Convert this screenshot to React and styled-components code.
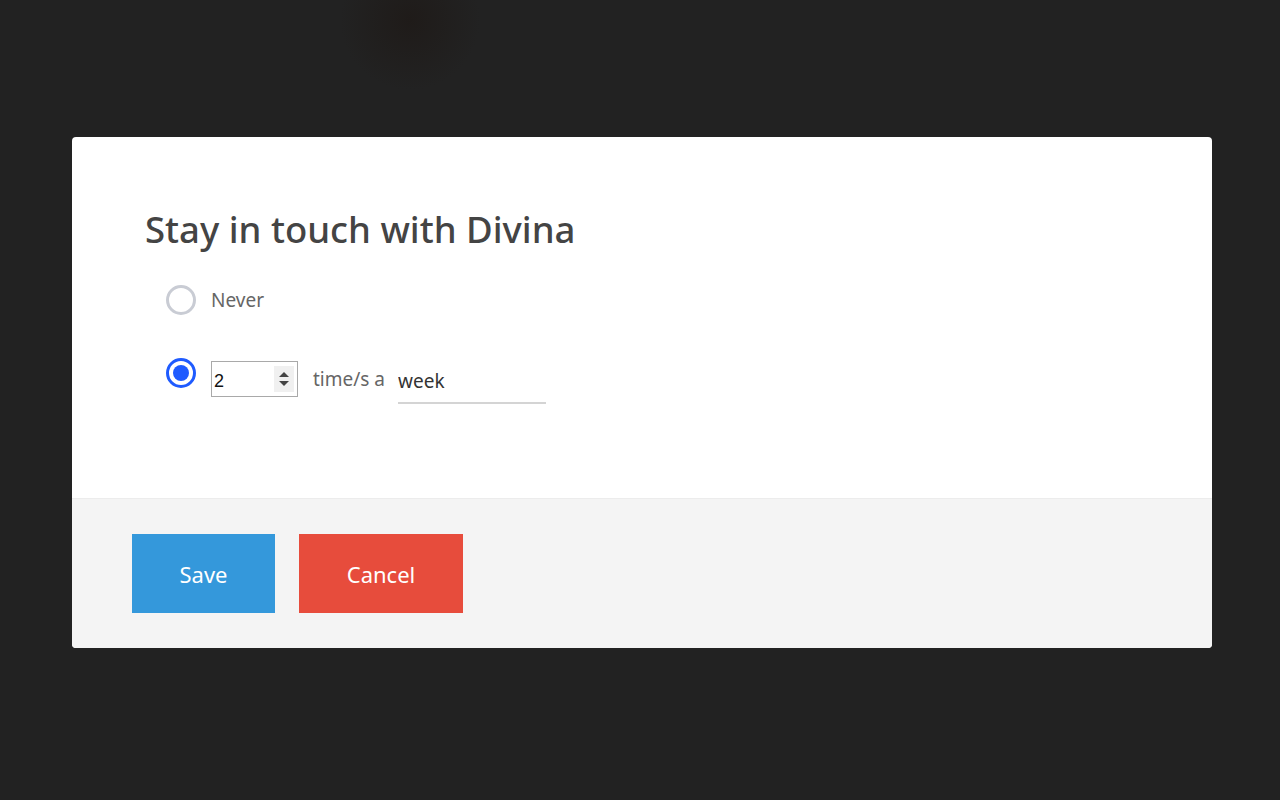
import React from 'react';
import styled, { createGlobalStyle } from 'styled-components';

const GlobalStyle = createGlobalStyle`
    html, body {
        margin: 0;
        padding: 0;
        background: #222222;
        font-family: 'Noto Sans', 'Open Sans', sans-serif;
    }
`;

const Page = styled.div`
    min-height: 800px;
    padding: 137px 68px 0 72px;
    box-sizing: border-box;
    background: radial-gradient(circle at 410px 20px, #1f1b19 0, #222222 70px);
`;

const Modal = styled.div`
    width: 1140px;
    background: #ffffff;
    border-radius: 4px;
    overflow: hidden;
`;

const Body = styled.div`
    height: 361px;
    box-sizing: border-box;
    padding: 68px 73px 0 73px;
`;

const Title = styled.h2`
    margin: 0 0 29px 0;
    font-size: 36.5px;
    font-weight: 500;
    color: #444444;
    letter-spacing: 0;
    line-height: 48px;
`;

const Options = styled.div`
    display: flex;
    flex-direction: column;
    gap: 43px;
    padding-left: 21px;
`;

const Option = styled.label`
    display: flex;
    align-items: center;
    gap: 15px;
    height: 36px;
`;

const Radio = styled.span`
    width: 30px;
    height: 30px;
    box-sizing: border-box;
    border-radius: 50%;
    border: 3px solid ${(props) => (props.checked ? '#1f5bff' : '#c9ccd4')};
    display: flex;
    align-items: center;
    justify-content: center;
    flex-shrink: 0;
    margin-top: ${(props) => (props.checked ? '-12px' : '0')};

    &::after {
        content: '';
        display: ${(props) => (props.checked ? 'block' : 'none')};
        width: 16px;
        height: 16px;
        border-radius: 50%;
        background: #1f5bff;
    }
`;

const Label = styled.span`
    font-size: 19px;
    color: ${(props) => props.color || '#666666'};
`;

const NumberBox = styled.div`
    width: 87px;
    height: 36px;
    box-sizing: border-box;
    border: 1px solid #a9a9a9;
    display: flex;
    align-items: center;
    padding: 0 3px 0 2px;
`;

const NumberValue = styled.input`
    border: none;
    outline: none;
    width: 50px;
    font-size: 18px;
    font-family: 'Liberation Sans', Arial, sans-serif;
    color: #111111;
    padding: 4px 0 0 0;
    background: transparent;
`;

const Spinner = styled.span`
    margin-left: auto;
    width: 20px;
    height: 26px;
    background: #f0f0f0;
    display: flex;
    align-items: center;
    justify-content: center;
`;

const Unit = styled.input`
    width: 148px;
    border: none;
    border-bottom: 2px solid #d4d4d4;
    outline: none;
    font-size: 19px;
    font-family: 'Noto Sans', 'Open Sans', sans-serif;
    color: #333333;
    padding: 7px 0 8px 0;
    margin-left: -2px;
    margin-top: 7px;
    background: transparent;
`;

const Footer = styled.div`
    height: 150px;
    box-sizing: border-box;
    background: #f4f4f4;
    border-top: 1px solid #ececec;
    padding: 35px 60px;
    display: flex;
    gap: 24px;
`;

const Button = styled.button`
    height: 79px;
    width: ${(props) => props.width}px;
    border: none;
    border-radius: 0;
    background: ${(props) => props.bg};
    color: #ffffff;
    font-size: 22px;
    font-family: 'Noto Sans', 'Open Sans', sans-serif;
    cursor: pointer;
`;

const SpinIcon = () => (
    <svg width="12" height="18" viewBox="0 0 12 18">
        <path d="M6 2 L11 7 L1 7 Z" fill="#444" />
        <path d="M6 16 L11 11 L1 11 Z" fill="#444" />
    </svg>
);

const App = () => (
    <Page>
        <GlobalStyle />
        <Modal>
            <Body>
                <Title>Stay in touch with Divina</Title>
                <Options>
                    <Option>
                        <Radio />
                        <Label>Never</Label>
                    </Option>
                    <Option>
                        <Radio checked />
                        <NumberBox>
                            <NumberValue defaultValue="2" readOnly />
                            <Spinner><SpinIcon /></Spinner>
                        </NumberBox>
                        <Label>time/s a</Label>
                        <Unit defaultValue="week" readOnly />
                    </Option>
                </Options>
            </Body>
            <Footer>
                <Button bg="#3498db" width={143}>Save</Button>
                <Button bg="#e74c3c" width={164}>Cancel</Button>
            </Footer>
        </Modal>
    </Page>
);

export default App;
